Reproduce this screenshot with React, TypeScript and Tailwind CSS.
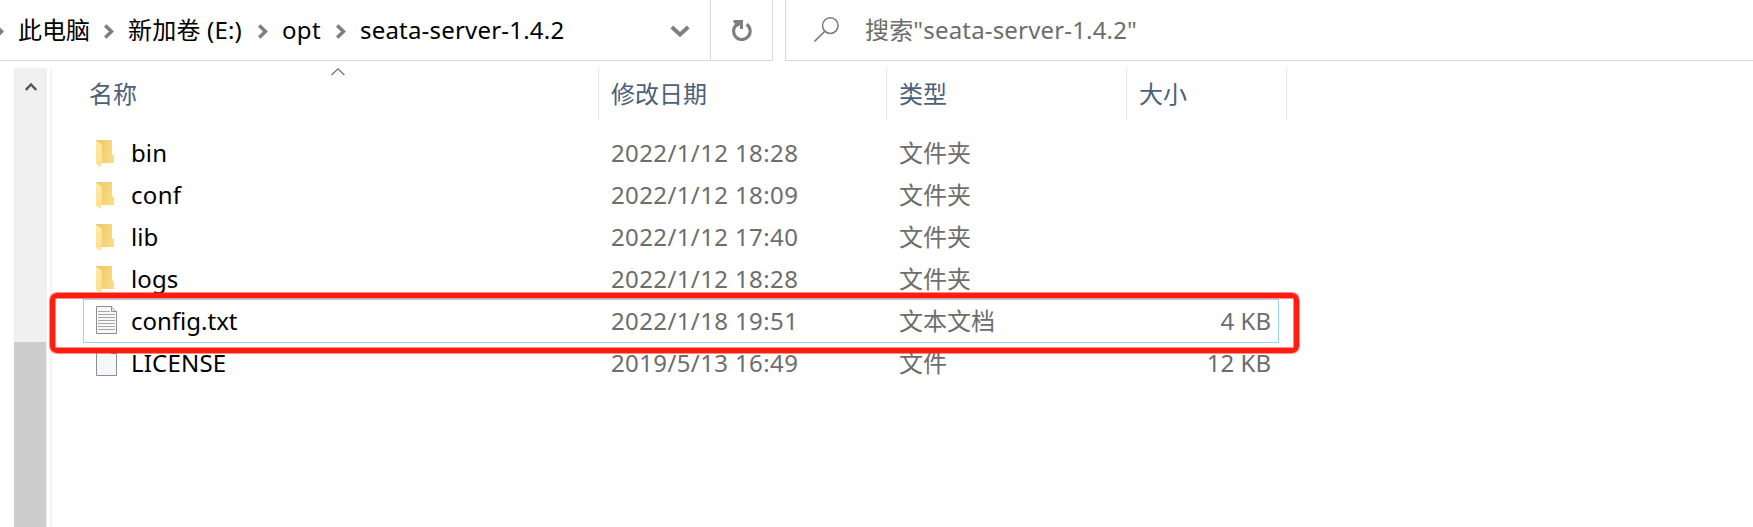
import React from "react";

type Entry = {
  name: string;
  nameClass: string;
  date: string;
  type: string;
  size?: string;
  icon: "folder" | "text" | "blank";
  focused?: boolean;
};

const entries: Entry[] = [
  { name: "bin", nameClass: "tracking-[0.1px]", date: "2022/1/12 18:28", type: "文件夹", icon: "folder" },
  { name: "conf", nameClass: "tracking-[0.3px]", date: "2022/1/12 18:09", type: "文件夹", icon: "folder" },
  { name: "lib", nameClass: "tracking-[0.1px]", date: "2022/1/12 17:40", type: "文件夹", icon: "folder" },
  { name: "logs", nameClass: "tracking-[0.1px]", date: "2022/1/12 18:28", type: "文件夹", icon: "folder" },
  { name: "config.txt", nameClass: "tracking-[0px]", date: "2022/1/18 19:51", type: "文本文档", size: "4 KB", icon: "text", focused: true },
  { name: "LICENSE", nameClass: "tracking-[0.2px]", date: "2019/5/13 16:49", type: "文件", size: "12 KB", icon: "blank" },
];

function FolderIcon() {
  return (
    <svg width="20" height="28" viewBox="0 0 20 28" className="mt-[2px] block">
      <defs>
        <linearGradient id="folderBack" x1="0" y1="0" x2="1" y2="0.3">
          <stop offset="0" stopColor="#e9c568" />
          <stop offset="1" stopColor="#fbdc80" />
        </linearGradient>
        <linearGradient id="folderFront" x1="0" y1="0" x2="0" y2="1">
          <stop offset="0" stopColor="#ffeaa8" />
          <stop offset="1" stopColor="#fbdf8c" />
        </linearGradient>
      </defs>
      <path d="M0 0H16V14L18 15.5V22.5L19 23H0Z" fill="url(#folderBack)" />
      <path d="M0 0.5L5.8 4.5V22L5 22.5V27L0 23.8Z" fill="url(#folderFront)" />
    </svg>
  );
}

function PageIcon({ lines }: { lines: boolean }) {
  return (
    <svg width="21" height="28" viewBox="0 0 21 28" className="mb-[2px] block">
      <path d="M0.5 0.5H15.5L20.5 5.5V27.5H0.5Z" fill={lines ? "#f8f8f8" : "#f6f7f9"} stroke="#8d8f93" />
      <path d="M15.5 0.5V5.5H20.5" fill="#e4e4e4" stroke="#8d8f93" />
      {lines && (
        <path
          d="M2 5.5H14M2 8.5H19M2 11.5H19M2 14.5H19M2 17.5H19M2 20.5H19M2 23.5H19"
          stroke="#a6a6a6"
          fill="none"
        />
      )}
    </svg>
  );
}

function Chevron() {
  return (
    <svg width="10" height="15" viewBox="0 0 10 15" className="block shrink-0">
      <path d="M1.2 1.5L7.5 7.5L1.2 13.5" fill="none" stroke="#7f7f7f" strokeWidth="3.6" />
    </svg>
  );
}

function AddressBar() {
  return (
    <div className="flex h-[61px] w-[773px] shrink-0 border-r border-b border-[#d9d9d9] text-black">
      <div className="flex h-[60px] w-[710px] shrink-0 items-center overflow-hidden">
        <div className="-ml-[6px] mt-[2px] w-[24px]">
          <Chevron />
        </div>
        <div className="w-[86px]">此电脑</div>
        <div className="mt-[2px] w-[24px]">
          <Chevron />
        </div>
        <div className="w-[130px] tracking-[0.2px] whitespace-nowrap">新加卷 (E:)</div>
        <div className="mt-[2px] w-[24px]">
          <Chevron />
        </div>
        <div className="w-[54px] tracking-[0.3px]">opt</div>
        <div className="mt-[2px] w-[24px]">
          <Chevron />
        </div>
        <div className="grow tracking-[0.2px] whitespace-nowrap">seata-server-1.4.2</div>
        <svg width="20" height="13" viewBox="0 0 20 13" className="mt-[3px] mr-[20px] block">
          <path d="M1.8 2L10 9.6L18.2 2" fill="none" stroke="#7f7f7f" strokeWidth="4" />
        </svg>
      </div>
      <div className="flex w-[62px] items-center justify-center border-l border-[#d9d9d9]">
        <svg width="22" height="22" viewBox="0 0 22 22" className="block">
          <path d="M15.6 5.4A8.3 8.3 0 1 1 5.6 5.8" fill="none" stroke="#7f7f7f" strokeWidth="3.2" />
          <path d="M2.5 1H12V10H9V6.2L6 8L4 4.2H2.5Z" fill="#7f7f7f" />
        </svg>
      </div>
    </div>
  );
}

function SearchBox() {
  return (
    <div className="ml-[12px] flex h-[61px] grow items-center border-b border-l border-[#d9d9d9] text-[#6d6d6d]">
      <svg width="26" height="26" viewBox="0 0 26 26" className="ml-[28px] block">
        <circle cx="16.3" cy="8.6" r="7.8" fill="none" stroke="#7a7a7a" strokeWidth="1.5" />
        <path d="M10.8 14.2L0.5 24.5" stroke="#7a7a7a" strokeWidth="1.6" />
      </svg>
      <div className="ml-[25px] tracking-[0.17px] whitespace-nowrap">搜索"seata-server-1.4.2"</div>
    </div>
  );
}

function ScrollBar() {
  return (
    <div className="ml-[14px] flex w-[33px] shrink-0 flex-col bg-[#f0f0f0]">
      <div className="flex h-[274px] justify-center pt-[14px]">
        <svg width="12" height="9" viewBox="0 0 12 9" className="block">
          <path d="M0.8 8L6 2.4L11.2 8" fill="none" stroke="#555" strokeWidth="2.4" />
        </svg>
      </div>
      <div className="w-[32px] grow bg-[#cdcdcd]" />
    </div>
  );
}

function HeaderRow() {
  return (
    <div className="flex h-[51px] text-[#4c607a]">
      <div className="flex w-[547px] border-r border-[#e5e5e5] pl-[37px]">
        <div className="w-[242px] pt-[8px]">名称</div>
        <svg width="14" height="8" viewBox="0 0 14 8" className="block">
          <path d="M0.6 7L7 0.8L13.4 7" fill="none" stroke="#6a6a6a" strokeWidth="1.1" />
        </svg>
      </div>
      <div className="w-[288px] border-r border-[#e5e5e5] pt-[8px] pl-[12px]">修改日期</div>
      <div className="w-[240px] border-r border-[#e5e5e5] pt-[8px] pl-[12px]">类型</div>
      <div className="w-[160px] border-r border-[#e5e5e5] pt-[8px] pl-[12px]">大小</div>
    </div>
  );
}

function FileRow({ entry }: { entry: Entry }) {
  return (
    <div
      className={
        entry.focused
          ? "-my-px flex h-[44px] w-[1196px] items-center border border-[#99d1ff]"
          : "flex h-[42px] w-[1196px] items-center border-x border-transparent"
      }
    >
      <div className="w-[35px] pl-[12px]">
        {entry.icon === "folder" ? <FolderIcon /> : <PageIcon lines={entry.icon === "text"} />}
      </div>
      <div className={`w-[492px] pl-[12px] text-black ${entry.nameClass}`}>{entry.name}</div>
      <div className="w-[288px] tracking-[0.38px] text-[#6d6d6d]">{entry.date}</div>
      <div className="w-[240px] text-[#6d6d6d]">{entry.type}</div>
      <div className="w-[132px] text-right text-[#6d6d6d]">{entry.size}</div>
    </div>
  );
}

export default function App() {
  return (
    <div className="relative flex h-[527px] w-[1753px] flex-col overflow-hidden bg-white font-['Noto_Sans','Noto_Sans_CJK_SC',sans-serif] text-[24px] leading-[36px]">
      <div className="flex">
        <AddressBar />
        <SearchBox />
      </div>
      <div className="mt-[7px] flex grow">
        <ScrollBar />
        <div className="ml-[3px] w-[2px] shrink-0 bg-[#f5f5f5]" />
        <div className="grow">
          <HeaderRow />
          <div className="mt-[13px] ml-[31px]">
            {entries.map((entry) => (
              <FileRow key={entry.name} entry={entry} />
            ))}
          </div>
        </div>
      </div>
      <div className="absolute top-[293px] left-[50px] h-[60px] w-[1249px] rounded-[7px] border-[5px] border-[#ff1d0f] shadow-[0_0_0_1px_#ff1d0f80,inset_0_0_0_1px_#ff1d0f80]" />
    </div>
  );
}
